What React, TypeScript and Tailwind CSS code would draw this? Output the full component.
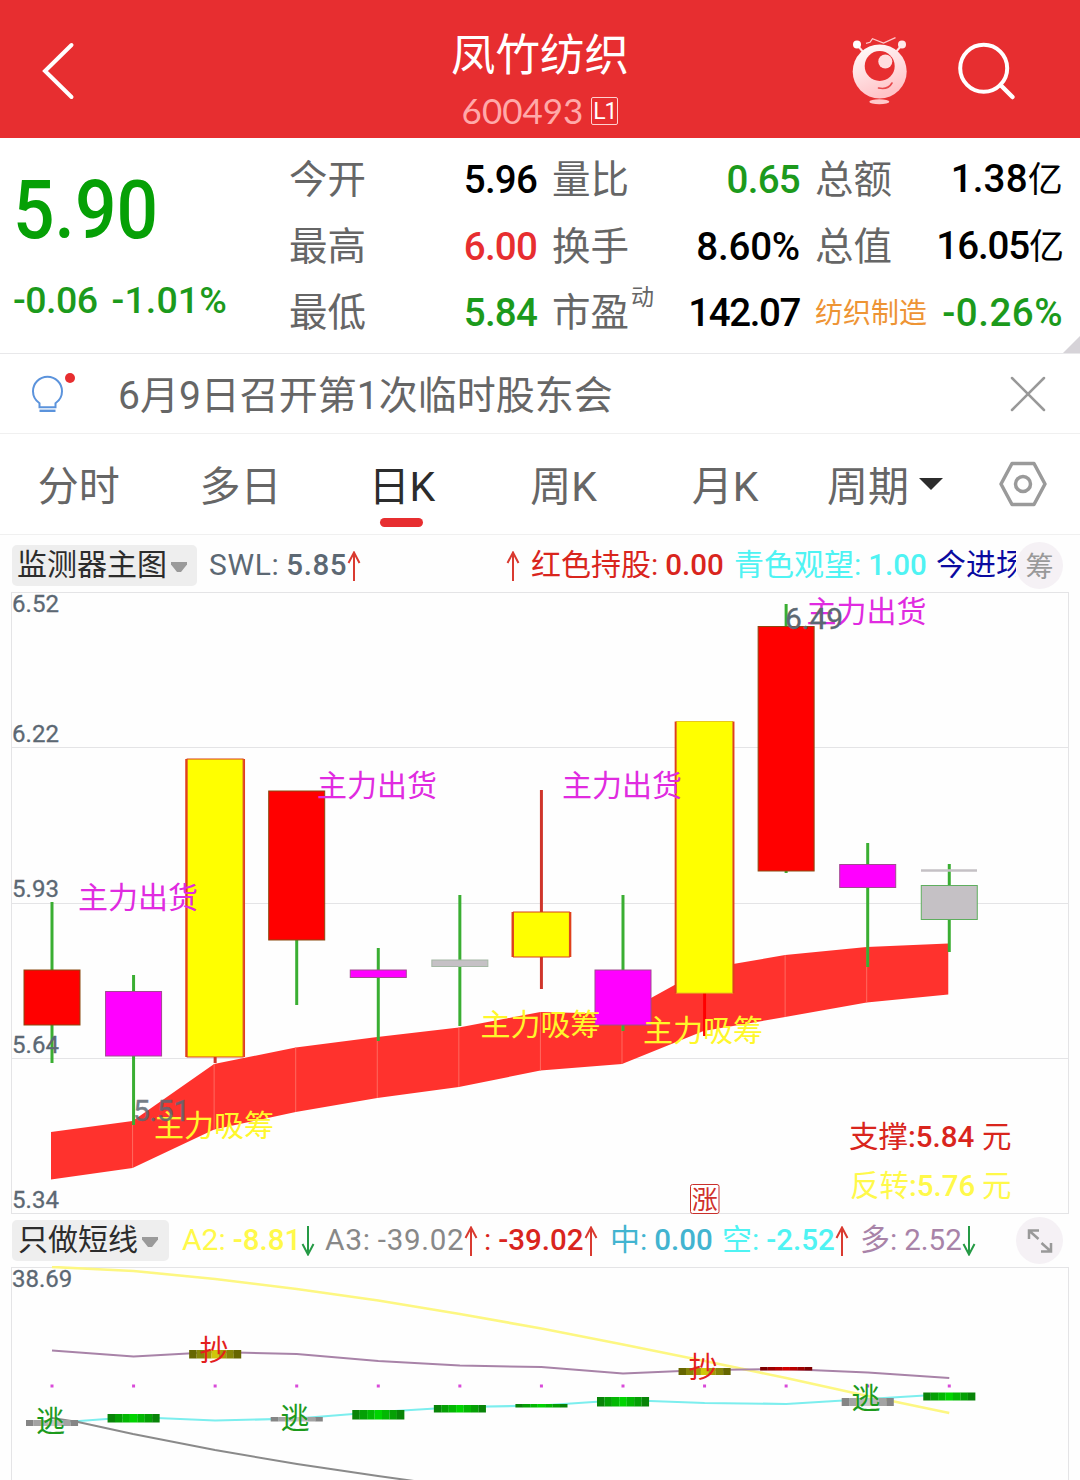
import clsx from "clsx";

type Item = {
  name: string;
  value?: string;
  arrow?: "up" | "down";
  className: string;
};

type Candle = {
  fill: string;
  stroke: string;
  top: number;
  bottom: number;
  high: number;
  low: number;
};

const RED = "#d93a30";
const GREEN = "#3aae32";

const quotes = [
  { label: "今开", value: "5.96", color: "text-black tracking-[-0.8px]" },
  { label: "量比", value: "0.65", color: "text-[#1c9a1c] tracking-[-0.7px]" },
  { label: "总额", value: "1.38", unit: "亿", color: "text-black tracking-[0.2px]" },
  { label: "最高", value: "6.00", color: "text-[#e72e30] tracking-[-0.8px]" },
  { label: "换手", value: "8.60%", color: "text-black tracking-[-0.2px]" },
  { label: "总值", value: "16.05", unit: "亿", color: "text-black tracking-[-1.1px]" },
  { label: "最低", value: "5.84", color: "text-[#1c9a1c] tracking-[-0.8px]" },
  { label: "市盈", sup: "动", value: "142.07", color: "text-black tracking-[-1.400px]" },
  { label: "纺织制造", value: "-0.26%", color: "text-[#1c9a1c] tracking-[0.5px]", sector: true },
];

const candles: Candle[] = [
  { fill: "#ff0000", stroke: "#8a4a10", top: 970, bottom: 1025, high: 902, low: 1063 },
  { fill: "#ff00ff", stroke: "#a04a90", top: 991.5, bottom: 1056, high: 975, low: 1125 },
  { fill: "#ffff00", stroke: "#d8401c", top: 759, bottom: 1057, high: 759, low: 1063 },
  { fill: "#ff0000", stroke: "#8a4a10", top: 791, bottom: 940, high: 791, low: 1005 },
  { fill: "#ff00ff", stroke: "#a04a90", top: 970, bottom: 977.5, high: 948, low: 1041 },
  { fill: "#c5c1c5", stroke: "#a5b8a5", top: 960, bottom: 966.5, high: 895, low: 1026 },
  { fill: "#ffff00", stroke: "#d8401c", top: 912, bottom: 957, high: 790, low: 989 },
  { fill: "#ff00ff", stroke: "#a04a90", top: 970, bottom: 1025, high: 895, low: 1031 },
  { fill: "#ffff00", stroke: "#e8c81c", top: 721.5, bottom: 993, high: 721, low: 1036 },
  { fill: "#ff0000", stroke: "#8a4a10", top: 626.5, bottom: 871, high: 604, low: 873 },
  { fill: "#ff00ff", stroke: "#a04a90", top: 864.5, bottom: 887.5, high: 843, low: 967 },
  { fill: "#c5c1c5", stroke: "#5fae5f", top: 885.5, bottom: 919.5, high: 864, low: 952 },
];

const bandTop = [1132, 1121, 1064, 1047.5, 1037, 1027.5, 1012, 1014, 969, 955, 947, 943.5];
const bandBottom = [1179.5, 1168, 1129.5, 1112, 1098, 1087, 1070.5, 1064, 1031, 1017, 1002.5, 994.5];

const signals = [
  { text: "主力出货", x: 78, y: 908, fill: "#e02be0" },
  { text: "主力出货", x: 317, y: 795.5, fill: "#e02be0" },
  { text: "主力出货", x: 562, y: 795.5, fill: "#e02be0" },
  { text: "主力出货", x: 806.5, y: 621.5, fill: "#e02be0" },
  { text: "主力吸筹", x: 154, y: 1135.5, fill: "#fff72b" },
  { text: "主力吸筹", x: 480.5, y: 1034.5, fill: "#fff72b" },
  { text: "主力吸筹", x: 643, y: 1040.5, fill: "#fff72b" },
];

const a2 = [1267, 1271, 1279, 1289, 1300.5, 1314, 1328.5, 1344.5, 1361, 1378, 1396, 1413];
const duo = [1350.5, 1356.5, 1352, 1354, 1361, 1365.5, 1367, 1373.5, 1370, 1369, 1372.5, 1378];
const kong = [1423, 1417, 1420.5, 1418.5, 1412, 1407, 1405.5, 1400, 1403, 1404, 1399, 1394];

const bars = [
  { tone: "gray", top: 1420, bottom: 1426 },
  { tone: "green", top: 1414, bottom: 1422.5 },
  { tone: "olive", top: 1350, bottom: 1358.5 },
  { tone: "gray", top: 1417, bottom: 1421.5 },
  { tone: "green", top: 1410, bottom: 1419.5 },
  { tone: "green", top: 1405, bottom: 1412.5 },
  { tone: "green", top: 1404, bottom: 1407.5 },
  { tone: "green", top: 1397, bottom: 1406.5 },
  { tone: "olive", top: 1368, bottom: 1375 },
  { tone: "red", top: 1367, bottom: 1370.5 },
  { tone: "gray", top: 1398, bottom: 1406 },
  { tone: "green", top: 1392.5, bottom: 1400.5 },
];

// Outer edge to centre, mirrored on the other half of the bar.
const tones: Record<string, string[]> = {
  gray: ["#858585", "#a3a3a3", "#b8b8b8", "#c9c9c9"],
  green: ["#088408", "#05a005", "#03b803", "#00d400"],
  olive: ["#666600", "#858508", "#a39a08", "#cfc70a"],
  red: ["#7d0000", "#9d0000", "#b80000", "#d40000"],
};

const marks = [
  { text: "逃", x: 50.5, y: 1432, fill: "#1c9a1c" },
  { text: "抄", x: 214, y: 1360.5, fill: "#e3201c" },
  { text: "逃", x: 295, y: 1428.5, fill: "#1c9a1c" },
  { text: "抄", x: 703, y: 1377.5, fill: "#e3201c" },
  { text: "逃", x: 866, y: 1408.5, fill: "#1c9a1c" },
];

const cx = (i: number) => 52 + i * 81.57;
const points = (ys: number[]) => ys.map((y, i) => `${cx(i)},${y}`).join(" ");

function Mascot() {
  return (
    <svg width="60" height="74" viewBox="850 34 60 74" fill="none">
      <defs>
        <linearGradient id="face" x1="0" y1="0" x2="0.4" y2="1">
          <stop offset="0" stopColor="#fff" />
          <stop offset="1" stopColor="#ffc4c8" />
        </linearGradient>
      </defs>
      <path d="M858 46l6 7M901 46l-6 7" stroke="#ffe3e4" strokeWidth="2" />
      <path d="M866 43.3l4-1 2.5-3.6 11 4.3 12-5.3" stroke="#ffc9cb" strokeWidth="1.3" />
      <circle cx="857" cy="44.5" r="4" fill="#fff" />
      <circle cx="902" cy="44.5" r="4" fill="#ffe9ea" />
      <circle cx="879.7" cy="71.5" r="27" fill="url(#face)" />
      <circle cx="879.7" cy="66" r="15" fill="#e72e30" />
      <circle cx="885.3" cy="61.5" r="7" fill="#ffdedf" />
      <path d="M878.5 88c6 1.300 11-.5 13.500-5" stroke="#e8484b" strokeWidth="1.6" strokeLinecap="round" />
      <ellipse cx="879.3" cy="101.7" rx="10" ry="2.5" fill="#ffc9cb" />
    </svg>
  );
}

function Header() {
  return (
    <header className="grid h-[138px] grid-cols-[1fr_200px_1fr] bg-[#e72e30] text-white">
      <div className="flex items-center pt-[3px] pl-[40px]">
        <svg width="36" height="60" viewBox="0 0 36 60" fill="none">
          <path d="M31.500 4L5 30l26.500 26" stroke="#fff" strokeWidth="4" strokeLinecap="round" />
        </svg>
      </div>
      <div className="flex flex-col items-center pt-[30px]">
        <h1 className="text-[44.500px] leading-[52px] whitespace-nowrap">凤竹纺织</h1>
        <div className="mt-[12px] flex items-center gap-2">
          <span className="-mt-[2px] font-['Lato'] text-[35px] leading-[36px] text-[#ffa9a9]">600493</span>
          <span className="flex h-[28px] w-[27px] items-center justify-center rounded-[2px] border border-[#ffd0d0] text-[23px] leading-none tracking-[-1px]">
            L1
          </span>
        </div>
      </div>
      <div className="flex items-center justify-end pt-1 pr-[62px]">
        <Mascot />
        <svg className="ml-[46px]" width="62" height="60" viewBox="956 40 62 60" fill="none">
          <circle cx="983.7" cy="67.3" r="23.500" stroke="#fff" strokeWidth="4" />
          <path d="M1000.500 84l12 12" stroke="#fff" strokeWidth="4.500" strokeLinecap="round" />
        </svg>
      </div>
    </header>
  );
}

function Quote() {
  return (
    <section className="relative flex h-[216px] border-b border-[#e8e8ea] bg-white">
      <div className="w-[289px] shrink-0 pl-[13px]">
        <div className="mt-[32px] h-[86px] w-[150px] origin-bottom-left scale-x-[0.95] scale-y-[1.05] text-[77px] leading-[86px] font-medium text-[#06a006]">
          5.90
        </div>
        <div className="mt-[22px] flex gap-[14px] text-[37.500px] leading-[44px] font-medium tracking-[-0.5px] whitespace-nowrap text-[#1c9a1c]">
          <span>-0.06</span>
          <span className="tracking-[0.1px]">-1.01%</span>
        </div>
      </div>
      <div className="grid grid-cols-[248px_248px_248px] grid-rows-[66.500px_66.500px_66.500px] gap-x-[15px] pt-[8px]">
        {quotes.map((q) => (
          <div key={q.label} className="flex items-center justify-between whitespace-nowrap">
            <span
              className={clsx(
                "relative",
                q.sector ? "pt-[3px] text-[28px] text-[#ee9434]" : "pt-[2px] text-[38.500px] text-[#666]"
              )}
            >
              {q.label}
              {q.sup && (
                <sup className="absolute -top-[1px] left-full pl-[2px] text-[23px] leading-[34px]">
                  {q.sup}
                </sup>
              )}
            </span>
            <span className={clsx("pt-[2px] text-[38.500px] leading-[46px] font-medium", q.color)}>
              {q.value}
              {q.unit && <span className="text-[35px] font-normal">{q.unit}</span>}
            </span>
          </div>
        ))}
      </div>
      <svg className="absolute right-0 bottom-0" width="17" height="17" viewBox="0 0 17 17">
        <path d="M17 0v17H0z" fill="#d6d3d8" />
      </svg>
    </section>
  );
}

function Notice() {
  return (
    <section className="flex h-[80px] items-center border-b border-[#f0f0f0] bg-white">
      <svg className="ml-[28px]" width="50" height="48" viewBox="28 370 50 48" fill="none">
        <path
          d="M40 407v-4c-4-2.800-6.500-7-6.500-12a14.500 14.500 0 0 1 29 0c0 5-2.500 9.200-6.500 12v4z"
          transform="translate(-.5 .2)"
          stroke="#5b93dc"
          strokeWidth="2"
        />
        <path d="M39.500 410.800h16" stroke="#5b93dc" strokeWidth="2.400" />
        <circle cx="70" cy="378" r="5" fill="#e72e30" />
      </svg>
      <p className="ml-[40px] flex-1 pt-[6px] text-[39px] text-[#666]">6月9日召开第1次临时股东会</p>
      <svg className="mr-[34px]" width="36" height="36" viewBox="0 0 36 36">
        <path d="M2 2l32 32M34 2L2 34" stroke="#999" strokeWidth="2.500" strokeLinecap="round" />
      </svg>
    </section>
  );
}

function Tabs() {
  const tabs = ["分时", "多日", "日K", "周K", "月K"];
  return (
    <nav className="flex h-[101px] items-center border-b border-[#f0f0f0] bg-white text-[41px] text-[#666]">
      <div className="-ml-[2px] grid w-[808px] grid-cols-5 pt-[7px]">
        {tabs.map((t) => (
          <div
            key={t}
            className={clsx("relative flex justify-center", t === "日K" && "text-[#2c2c2c]")}
          >
            {t}
            {t === "日K" && (
              <span className="absolute -bottom-[9px] h-[9px] w-[43px] rounded-full bg-[#e72e30]" />
            )}
          </div>
        ))}
      </div>
      <div className="ml-[21px] flex items-center gap-[10px]">
        <span className="pt-[7px]">周期</span>
        <svg width="24" height="12" viewBox="0 0 24 12">
          <path d="M0 0h24L12 12z" fill="#2c2c2c" />
        </svg>
      </div>
      <svg className="ml-[55.500px]" width="48" height="46" viewBox="0 0 48 46" fill="none" stroke="#9a9a9a">
        <path d="M13 2.500h22L46 23 35 43.500H13L2 23z" strokeWidth="3.500" strokeLinejoin="round" />
        <circle cx="24" cy="23" r="7.500" strokeWidth="3.500" />
      </svg>
    </nav>
  );
}

function Arrow({ dir }: { dir: "up" | "down" }) {
  return (
    <svg
      className={clsx("shrink-0", dir === "down" && "rotate-180")}
      width="14"
      height="30"
      viewBox="0 0 14 30"
      fill="none"
    >
      <path
        d="M7 30V1.500M1.500 12L7 1.500 12.500 12"
        stroke={dir === "up" ? RED : "#259a45"}
        strokeWidth="2"
      />
    </svg>
  );
}

function Picker({ label, className }: { label: string; className?: string }) {
  return (
    <button
      className={clsx(
        "flex h-[41px] shrink-0 items-center rounded-[5px] bg-[#eeeeee] text-[30px] leading-[37px] text-[#2c2c2c]",
        className
      )}
    >
      <span className="-mt-[2px]">{label}</span>
      <svg className="mt-[3px] ml-[3px]" width="18" height="12" viewBox="0 0 18 12">
        <path d="M1 1h16v2.500L11 11H7L1 3.500z" fill="#9a9a9a" />
      </svg>
    </button>
  );
}

function Legend({ items, className }: { items: Item[]; className?: string }) {
  return (
    <div
      className={clsx(
        "flex h-[50px] items-center overflow-hidden text-[30px] leading-[46px] whitespace-nowrap",
        className
      )}
    >
      {items.map((it, i) => (
        <span key={i} className={clsx("flex shrink-0 items-center", it.className)}>
          {it.name && <span className="-mt-[2px] font-normal">{it.name}</span>}
          {it.value && <span className="-mt-[2px] pl-[7px] text-[29.500px]">{it.value}</span>}
          {it.arrow && <Arrow dir={it.arrow} />}
        </span>
      ))}
    </div>
  );
}

function MainChart() {
  const band = [
    ...bandTop.map((y, i) => `${cx(i) - 1},${y}`),
    ...bandBottom.map((y, i) => `${cx(i) - 1},${y}`).reverse(),
  ].join(" ");

  return (
    <svg className="block overflow-visible" width="1080" height="623" viewBox="0 592 1080 623">
      <g stroke="#e4e4e6" fill="none">
        <rect x="11.500" y="592.500" width="1057" height="621" />
        <path d="M12 747.500h1056M12 903.500h1056M12 1058.500h1056" />
      </g>
      <polygon points={band} fill="#ff322d" />
      {bandTop.slice(1, -1).map((y, i) => (
        <path
          key={i}
          d={`M${cx(i + 1) - 1} ${y}V${bandBottom[i + 1]}`}
          stroke="#ff6a60"
          strokeWidth="1"
        />
      ))}
      {candles.map((c, i) => {
        const wick = c.fill === "#ffff00" ? (i === 8 ? "#ff0000" : "#cf352b") : GREEN;
        return (
          <g key={i}>
            <path d={`M${cx(i)} ${c.high}V${c.low}`} stroke={wick} strokeWidth="3" />
            <rect
              x={cx(i) - 28}
              y={c.top}
              width="56"
              height={c.bottom - c.top}
              fill={c.fill}
              stroke={c.stroke}
              strokeWidth="1"
            />
            {c.fill === "#ffff00" && (
              <path
                d={`M${cx(i) - 29} ${c.top}V${c.bottom}M${cx(i) + 29} ${c.top}V${c.bottom}`}
                stroke="#e0401c"
                strokeWidth="1.800"
              />
            )}
          </g>
        );
      })}
      <path d="M921 870.500h56" stroke="#c5c1c5" strokeWidth="2.500" />
      <g fontSize="24" fill="#5c6873" stroke="#5c6873" strokeWidth=".3">
        <text x="12" y="612" textLength="47">6.52</text>
        <text x="12" y="742" textLength="47">6.22</text>
        <text x="12" y="897" textLength="47">5.93</text>
        <text x="12" y="1053" textLength="47">5.64</text>
        <text x="12" y="1208" textLength="47">5.34</text>
      </g>
      <g fontSize="30">
        {signals.map((s, i) => (
          <text key={i} x={s.x} y={s.y} fill={s.fill}>
            {s.text}
          </text>
        ))}
      </g>
      <g fontSize="30" fill="#5c6873" stroke="#5c6873" strokeWidth=".3">
        <text x="785" y="629" textLength="58">6.49</text>
        <text x="133" y="1120.500" textLength="57" opacity=".85">5.51</text>
      </g>
      <g fontSize="29.500">
        <text x="849" y="1147" fill="#d9251d">
          支撑<tspan className="font-medium">:5.84</tspan>
        </text>
        <text x="982" y="1147" fill="#d9251d">元</text>
        <text x="850" y="1195.500" fill="#fff94a">
          反转<tspan className="font-medium">:5.76</tspan>
        </text>
        <text x="982" y="1195.500" fill="#fff94a">元</text>
      </g>
      <rect x="690.500" y="1184.500" width="28.500" height="29" rx="2" fill="#fff" stroke="#c9302c" />
      <text x="704.700" y="1208.500" fontSize="26" textAnchor="middle" fill="#d0302c">涨</text>
    </svg>
  );
}

function SubChart() {
  return (
    <svg className="block" width="1080" height="214" viewBox="0 1266 1080 214">
      <rect x="11.500" y="1267.500" width="1057" height="240" fill="none" stroke="#e4e4e6" />
      <g fill="none">
        <polyline points={points(a2)} stroke="#fdf782" strokeWidth="2.600" />
        <polyline points={points(duo)} stroke="#a883a8" strokeWidth="2" />
        <polyline points={points(kong)} stroke="#7ceeee" strokeWidth="2.200" />
        <polyline
          points="52,1418 78,1422 133,1434 215,1450 297,1464 378,1476 450,1486"
          stroke="#8a8a8a"
          strokeWidth="2"
        />
      </g>
      {kong.map((_, i) => (
        <rect key={i} x={cx(i) - 1.5} y="1384.500" width="3" height="3" fill="#d94bd9" />
      ))}
      {bars.map((b, i) => {
        const t = tones[b.tone];
        return [...t, ...t.slice(0, 3).reverse()].map((fill, j) => (
          <rect
            key={`${i}-${j}`}
            x={cx(i) - 26 + j * 7.43}
            y={b.top}
            width={7.5}
            height={b.bottom - b.top}
            fill={fill}
          />
        ));
      })}
      <text x="12" y="1287" fontSize="24" fill="#5c6873" stroke="#5c6873" strokeWidth=".3">38.69</text>
      <g fontSize="29" textAnchor="middle">
        {marks.map((m, i) => (
          <text key={i} x={m.x} y={m.y} fill={m.fill}>
            {m.text}
          </text>
        ))}
      </g>
    </svg>
  );
}

export default function App() {
  return (
    <main className="h-[1480px] w-[1080px] overflow-hidden bg-[#fefefe] font-['Roboto','Noto_Sans_CJK_SC',sans-serif]">
      <Header />
      <Quote />
      <Notice />
      <Tabs />
      <div className="flex h-[57px] items-center pt-[4px] pl-[12px]">
        <Picker label="监测器主图" className="w-[185px] pl-[5px]" />
        <Legend
          className="ml-[12px] w-[807px]"
          items={[
            { name: "SWL:", value: "5.85", arrow: "up", className: "w-[297px] font-medium tracking-[0.6px] text-[#5c6873]" },
            { name: "", arrow: "up", className: "w-[25px]" },
            { name: "红色持股:", value: "0.00", className: "w-[203px] font-medium text-[#d9251d]" },
            { name: "青色观望:", value: "1.00", className: "w-[202px] font-medium text-[#4ff3f3]" },
            { name: "今进场", className: "text-[#0a0aa0]" },
          ]}
        />
        <span className="flex h-[47px] w-[47px] items-center justify-center rounded-full bg-[#f5f1f5] pt-[4px] text-[28px] leading-[40px] text-[#999]">
          筹
        </span>
      </div>
      <MainChart />
      <div className="flex h-[51px] items-center pl-[12px]">
        <Picker label="只做短线" className="w-[157px] pl-[6px]" />
        <Legend
          className="ml-[13px] w-[834px]"
          items={[
            { name: "A2:", value: "-8.81", arrow: "down", className: "w-[143px] font-medium text-[#fff94a]" },
            { name: "A3:", value: "-39.02", arrow: "up", className: "w-[159px] tracking-[0.7px] text-[#888]" },
            { name: ":", value: "-39.02", arrow: "up", className: "w-[126px] font-medium text-[#d9251d]" },
            { name: "中:", value: "0.00", className: "w-[112px] font-medium text-[#42b4d0]" },
            { name: "空:", value: "-2.52", arrow: "up", className: "w-[138px] font-medium text-[#4ff3f3]" },
            { name: "多:", value: "2.52", arrow: "down", className: "text-[#a883a8]" },
          ]}
        />
        <span className="flex h-[47px] w-[47px] items-center justify-center rounded-full bg-[#f5f1f5]">
          <svg width="26" height="26" viewBox="0 0 26 26" fill="none" stroke="#999" strokeWidth="2.500">
            <path d="M2 11V2.500h10M2 2.500l9.500 8.500M24 15v8.500H14M24 23.500L14.500 15" />
          </svg>
        </span>
      </div>
      <SubChart />
    </main>
  );
}
